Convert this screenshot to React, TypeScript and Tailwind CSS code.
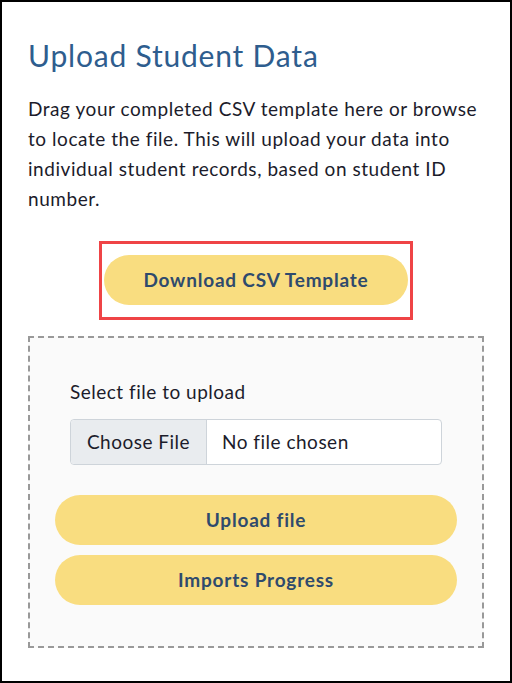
import React from 'react';

const font = { fontFamily: '"Lato", "Open Sans", sans-serif' };

function PillButton({ children, className = '' }: { children: React.ReactNode; className?: string }) {
    return (
        <button
            type="button"
            className={`h-[50px] rounded-full bg-[#f9dd80] text-[19px] font-bold tracking-[0.8px] text-[#2f4a6d] ${className}`}
        >
            {children}
        </button>
    );
}

export default function App() {
    return (
        <div
            className="w-[512px] h-[683px] border-2 border-black bg-white px-[26px] pt-[33px] text-[#1c1c2b]"
            style={font}
        >
            {/* Heading */}
            <h1 className="text-[30px] leading-[40px] tracking-[0.8px] text-[#2e5d8e]">Upload Student Data</h1>

            {/* Intro copy */}
            <p className="mt-[19px] text-[19px] leading-[30px] tracking-[0.55px]">
                Drag your completed CSV template here or browse to locate the file. This will upload your data into
                individual student records, based on student ID number.
            </p>

            {/* Template download, outlined in red */}
            <div className="mt-[27px] flex justify-center">
                <div className="border-[3px] border-[#ef4446] px-[2px] pt-[11px] pb-[12px]">
                    <PillButton className="w-[304px]">Download CSV Template</PillButton>
                </div>
            </div>

            {/* Drop zone */}
            <div className="mt-[16px] h-[312px] border-2 border-dashed border-[#999999] bg-[#fafafa] px-[25px] pt-[39px]">
                <div className="px-[15px] text-[19px] tracking-[0.5px]">
                    <div className="leading-[30px]">Select file to upload</div>
                    <div className="mt-[12px] flex h-[46px] rounded-[4px] border border-[#ced4da] bg-white">
                        <div className="flex w-[136px] items-center justify-center rounded-l-[4px] border-r border-[#ced4da] bg-[#e9ecef]">
                            Choose File
                        </div>
                        <div className="flex items-center pl-[15px]">No file chosen</div>
                    </div>
                </div>
                <div className="mt-[30px] flex flex-col gap-[10px]">
                    <PillButton>Upload file</PillButton>
                    <PillButton>Imports Progress</PillButton>
                </div>
            </div>
        </div>
    );
}
